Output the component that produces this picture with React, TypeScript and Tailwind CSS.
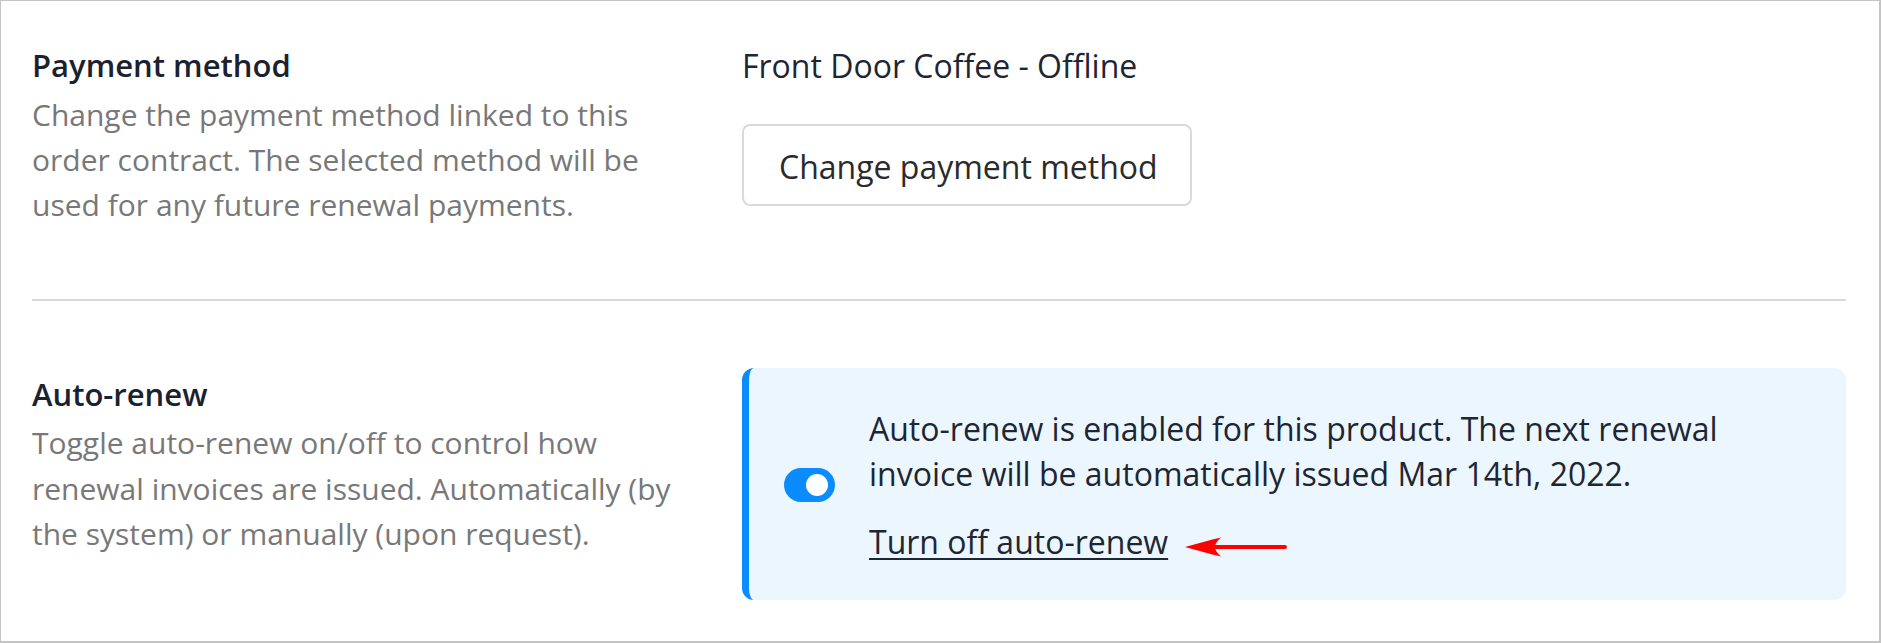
import { useState } from 'react'

function Toggle({ on, onChange }: { on: boolean; onChange: () => void }) {
  return (
    <button
      type="button"
      onClick={onChange}
      className={`flex h-[34px] w-[51px] shrink-0 items-center rounded-full px-[7px] ${on ? 'justify-end bg-[#0a8cff]' : 'justify-start bg-[#c9d3dd]'}`}
    >
      <span className="block h-[22px] w-[22px] rounded-full bg-white" />
    </button>
  )
}

function RedArrow() {
  return (
    <svg width="104" height="22" viewBox="0 0 104 22" className="mt-[10px] ml-[17px] shrink-0">
      <line x1="28" y1="11" x2="100" y2="11" stroke="#ff0000" strokeWidth="4" strokeLinecap="round" />
      <path d="M0 11 C12 8 25 4 36 1.5 C32 5 30 8 30 11 C30 14 32 17 36 20.5 C25 18 12 14 0 11 Z" fill="#ff0000" />
    </svg>
  )
}

export default function App() {
  const [autoRenew, setAutoRenew] = useState(true)

  return (
    <div
      className="box-border h-[643px] w-full border-t border-l border-r-2 border-b-2 border-[#c4c4c4] bg-white pt-[42px] pl-[31px] pr-[33px]"
      style={{ fontFamily: '"Open Sans", "Noto Sans", sans-serif' }}
    >
      {/* Payment method */}
      <div className="grid grid-cols-[710px_1fr]">
        <div>
          <h2 className="text-[31px] font-semibold leading-[45px] text-[#1a2230]">Payment method</h2>
          <p className="mt-[4px] max-w-[650px] text-[30px] leading-[45px] text-[#787878]">
            Change the payment method linked to this order contract. The selected method will be used for any future renewal payments.
          </p>
        </div>
        <div>
          <div className="text-[32px] leading-[45px] text-[#1e2633]">Front Door Coffee - Offline</div>
          <button
            type="button"
            className="mt-[36px] flex h-[82px] items-center rounded-[8px] border-2 border-[#dadada] bg-white pl-[35px] pr-[32px] pt-[3px] text-[32px] leading-[45px] text-[#2b2b2b]"
          >
            Change payment method
          </button>
        </div>
      </div>

      <div className="mt-[72px] h-[2px] bg-[#d9d9d9]" />

      {/* Auto-renew */}
      <div className="mt-[67px] grid grid-cols-[710px_1fr]">
        <div className="pt-[4px]">
          <h2 className="text-[31px] font-semibold leading-[45px] text-[#1a2230]">Auto-renew</h2>
          <p className="mt-[3px] max-w-[660px] text-[30px] leading-[45.5px] text-[#787878]">
            Toggle auto-renew on/off to control how renewal invoices are issued. Automatically (by the system) or manually (upon request).
          </p>
        </div>
        <div className="flex items-center rounded-[12px] border-l-[7px] border-[#0a8cff] bg-[#ebf6ff] pl-[35px] pt-[38px] pb-[36px]">
          <Toggle on={autoRenew} onChange={() => setAutoRenew(!autoRenew)} />
          <div className="ml-[34px] max-w-[900px] text-[32px] leading-[45px] text-[#1e2633]">
            <p>
              Auto-renew is enabled for this product. The next renewal invoice will be automatically issued Mar 14th, 2022.
            </p>
            <div className="mt-[23px] flex items-center">
              <a href="#" className="underline decoration-2 underline-offset-[4px] text-[#1e2633]">
                Turn off auto-renew
              </a>
              <RedArrow />
            </div>
          </div>
        </div>
      </div>
    </div>
  )
}
